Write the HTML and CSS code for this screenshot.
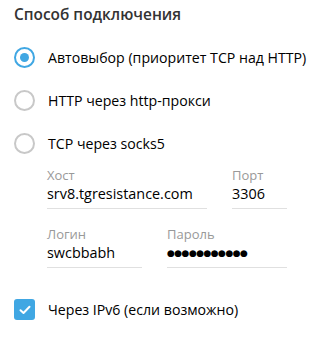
FILE: index.html
```html
<!DOCTYPE html>
<html lang="ru">
<head>
<meta charset="utf-8">
<link rel="stylesheet" href="styles.css">
</head>
<body>
<div class="panel">
  <div class="title">Способ подключения</div>
  <div class="options">
    <div class="option">
      <span class="radio checked"><span class="dot"></span></span>
      <span class="label">Автовыбор (приоритет TCP над HTTP)</span>
    </div>
    <div class="option">
      <span class="radio"></span>
      <span class="label">HTTP через http-прокси</span>
    </div>
    <div class="option">
      <span class="radio"></span>
      <span class="label">TCP через socks5</span>
    </div>
  </div>
  <div class="fields">
    <div class="row">
      <div class="field host">
        <div class="flabel">Хост</div>
        <div class="fvalue">srv8.tgresistance.com</div>
      </div>
      <div class="field port">
        <div class="flabel">Порт</div>
        <div class="fvalue">3306</div>
      </div>
    </div>
    <div class="row">
      <div class="field login">
        <div class="flabel">Логин</div>
        <div class="fvalue">swcbbabh</div>
      </div>
      <div class="field pass">
        <div class="flabel">Пароль</div>
        <div class="fvalue dots"><span>●</span><span>●</span><span>●</span><span>●</span><span>●</span><span>●</span><span>●</span><span>●</span><span>●</span><span>●</span><span>●</span></div>
      </div>
    </div>
  </div>
  <div class="check-row">
    <span class="checkbox">
      <svg width="12" height="10" viewBox="0 0 12 10"><path d="M1.5 5.2 L4.5 8 L10.5 1.8" fill="none" stroke="#fff" stroke-width="2" stroke-linecap="round" stroke-linejoin="round"/></svg>
    </span>
    <span class="label">Через IPv6 (если возможно)</span>
  </div>
</div>
</body>
</html>
```

FILE: styles.css
```css
html, body {
  margin: 0;
  padding: 0;
  background: #ffffff;
}
body {
  font-family: "Open Sans", "DejaVu Sans", sans-serif;
  color: #000;
  width: 309px;
  height: 342px;
  overflow: hidden;
}
.panel {
  padding: 5px 0 0 14px;
}
.title {
  font-size: 15.4px;
  font-weight: 600;
  line-height: 20px;
  color: #333333;
  height: 20px;
}
.options {
  margin-top: 11px;
}
.option {
  display: flex;
  align-items: center;
  height: 43px;
}
.radio {
  box-sizing: border-box;
  width: 21px;
  height: 21px;
  border-radius: 50%;
  border: 2px solid #c8c8c8;
  display: flex;
  align-items: center;
  justify-content: center;
  flex: none;
}
.radio.checked {
  border-color: #40a7e3;
}
.dot {
  width: 9px;
  height: 9px;
  border-radius: 50%;
  background: #40a7e3;
}
.label {
  margin-left: 13px;
  font-size: 14.15px;
  line-height: 20px;
  color: #000;
  white-space: nowrap;
}
.fields {
  padding-left: 33px;
  margin-top: 2px;
}
.row {
  display: flex;
  height: 59px;
}
.field {
  display: flex;
  flex-direction: column;
  border-bottom: 1px solid #e0e0e0;
  height: 42px;
  box-sizing: border-box;
}
.host { width: 160px; margin-right: 25px; }
.port { width: 55px; }
.login { width: 95px; margin-right: 25px; }
.pass { width: 120px; }
.flabel {
  font-size: 13px;
  line-height: 16px;
  color: #999999;
}
.fvalue {
  font-size: 14.4px;
  line-height: 18px;
  margin-top: 2px;
  color: #000;
  white-space: nowrap;
}
.dots {
  display: flex;
  align-items: center;
  height: 18px;
  font-family: "DejaVu Sans", sans-serif;
  font-size: 9px;
  line-height: 18px;
}
.dots span {
  display: block;
  width: 7.3px;
  text-align: center;
  overflow: visible;
}
.check-row {
  display: flex;
  align-items: center;
  margin-top: 14px;
}
.checkbox {
  width: 21px;
  height: 21px;
  border-radius: 3px;
  background: #40a7e3;
  display: flex;
  align-items: center;
  justify-content: center;
  flex: none;
}
.checkbox svg { display: block; }
.check-row .label {
  margin-left: 13px;
}
```
